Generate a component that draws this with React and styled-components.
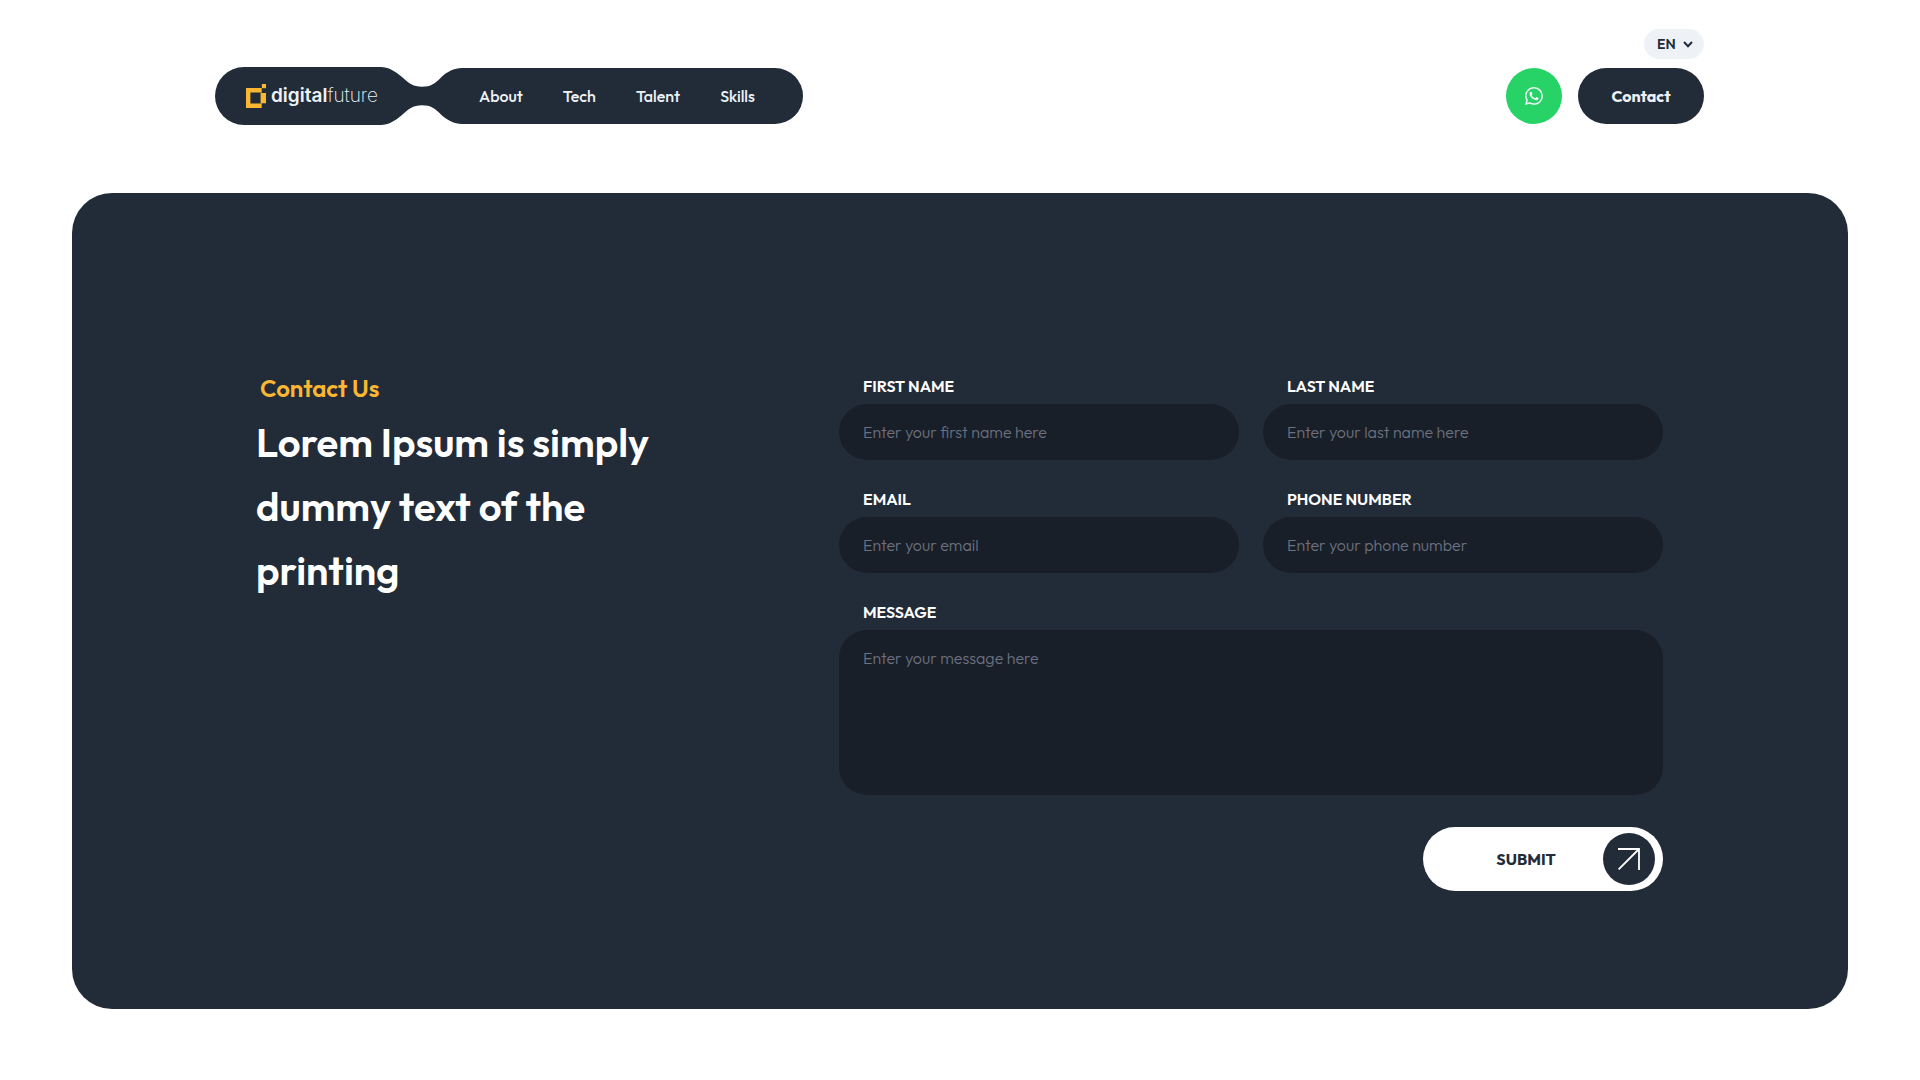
import React from "react";
import styled, { createGlobalStyle } from "styled-components";
import { BsWhatsapp } from "react-icons/bs";

const color = {
  ink: "#222c38",
  field: "#191f29",
  mist: "#eef2f6",
  hint: "#6b7280",
  accent: "#fbb731",
  whatsapp: "#27d367",
};

const GlobalStyle = createGlobalStyle`
  *, *::before, *::after { box-sizing: border-box; }
  body {
    margin: 0;
    background: #fff;
    color: ${color.ink};
    font-family: Outfit, Lato, "Liberation Sans", sans-serif;
    font-size: 16px;
    line-height: 24px;
  }
  button, input, select, textarea { font: inherit; }
`;

const Page = styled.div`
  padding: 29px 72px 71px;
`;

const Header = styled.header`
  display: flex;
  flex-direction: column;
  gap: 8px;
  width: 100%;
  max-width: 1490px;
  margin: 0 auto 68px;
  padding-right: 1px;
`;

const LanguagePicker = styled.label`
  position: relative;
  align-self: flex-end;
  display: block;
`;

const LanguageSelect = styled.select`
  display: block;
  width: 60px;
  height: 30px;
  padding: 0 24px 0 13px;
  border: 0;
  border-radius: 15px;
  appearance: none;
  background: ${color.mist};
  color: ${color.ink};
  font-size: 14px;
  font-weight: 600;
  cursor: pointer;
`;

const Chevron = styled.svg`
  position: absolute;
  top: 12px;
  right: 11px;
  pointer-events: none;
`;

const HeaderRow = styled.div`
  display: flex;
  flex-wrap: wrap;
  align-items: center;
  justify-content: space-between;
  gap: 16px;
`;

const MenuBar = styled.div`
  display: flex;
  align-items: center;
`;

const Brand = styled.a`
  display: flex;
  align-items: center;
  gap: 5px;
  height: 58px;
  padding: 0 3px 0 31px;
  border-radius: 29px 0 0 29px;
  background: ${color.ink};
  color: ${color.mist};
  font-family: Inter, "Liberation Sans", sans-serif;
  font-size: 19px;
  font-weight: 200;
  text-decoration: none;

  b { font-weight: 600; }
`;

const Bridge = styled.svg`
  display: block;
  flex: none;
`;

const Nav = styled.nav`
  display: flex;
  align-items: center;
  gap: 40px;
  height: 56px;
  padding: 0 48px 0 17px;
  border-radius: 0 28px 28px 0;
  background: ${color.ink};
`;

const NavLink = styled.a`
  color: ${color.mist};
  font-weight: 500;
  text-decoration: none;
`;

const Actions = styled.div`
  display: flex;
  gap: 16px;
`;

const WhatsAppLink = styled.a`
  display: grid;
  place-items: center;
  width: 56px;
  height: 56px;
  border-radius: 50%;
  background: ${color.whatsapp};
  color: ${color.mist};
`;

const ContactButton = styled.button`
  width: 126px;
  height: 56px;
  border: 0;
  border-radius: 28px;
  background: ${color.ink};
  color: ${color.mist};
  font-weight: 700;
  cursor: pointer;
`;

const Panel = styled.main`
  padding: 181px 16px 118px;
  border-radius: 40px;
  background: ${color.ink};
  color: #fff;
`;

const Columns = styled.div`
  display: grid;
  grid-template-columns: 583fr 824fr;
  max-width: 1408px;
  margin: 0 auto;
  padding-right: 1px;

  @media (max-width: 1100px) {
    grid-template-columns: 1fr;
    gap: 48px;
  }
`;

const Intro = styled.section`
  max-width: 440px;
`;

const Eyebrow = styled.p`
  margin: 0 0 8px;
  padding-left: 4px;
  color: ${color.accent};
  font-size: 24px;
  font-weight: 600;
  line-height: 28px;
`;

const Heading = styled.h1`
  margin: 0;
  font-size: 40px;
  font-weight: 600;
  line-height: 64px;
`;

const Form = styled.form`
  display: grid;
  grid-template-columns: 1fr 1fr;
  gap: 27px 24px;
`;

const Field = styled.div`
  display: flex;
  flex-direction: column;
  gap: 6px;
  grid-column: ${(p) => (p.$wide ? "1 / -1" : "auto")};
`;

const FieldLabel = styled.label`
  padding-left: 24px;
  font-weight: 600;
  text-transform: uppercase;
`;

const TextBox = styled.input`
  width: 100%;
  height: ${(p) => (p.$tall ? "165px" : "56px")};
  padding: 16px 24px;
  border: 0;
  border-radius: 28px;
  outline-offset: 2px;
  background: ${color.field};
  color: #fff;
  font-weight: 300;
  resize: none;

  &::placeholder {
    color: ${color.hint};
    opacity: 1;
  }
`;

const SubmitRow = styled.div`
  display: flex;
  justify-content: flex-end;
  grid-column: 1 / -1;
  padding-top: 5px;
`;

const SubmitButton = styled.button`
  display: flex;
  align-items: center;
  width: 240px;
  height: 64px;
  padding: 0 8px 0 26px;
  border: 0;
  border-radius: 32px;
  background: #fff;
  color: ${color.ink};
  font-weight: 700;
  cursor: pointer;
`;

const SubmitText = styled.span`
  flex: 1;
  text-align: center;
`;

const ArrowDisc = styled.span`
  display: grid;
  place-items: center;
  width: 52px;
  height: 52px;
  border-radius: 50%;
  background: ${color.ink};
`;

const links = ["About", "Tech", "Talent", "Skills"];

const fields = [
  { id: "first-name", label: "First name", hint: "Enter your first name here", type: "text" },
  { id: "last-name", label: "Last name", hint: "Enter your last name here", type: "text" },
  { id: "email", label: "Email", hint: "Enter your email", type: "email" },
  { id: "phone", label: "Phone number", hint: "Enter your phone number", type: "tel" },
];

function LogoMark() {
  return (
    <svg width="20" height="24" viewBox="0 0 20 24" fill={color.accent} aria-hidden="true">
      <path d="M0 4H15.7V8.4H4.4V19.5H15.7V24H0Z" />
      <path d="M15 9H20V19.3H15Z" />
      <path d="M15.9 0H20V4.2H15.9Z" />
      <path d="M14.6 8.4H15.4V19.5H14.6Z" />
    </svg>
  );
}

export default function App() {
  return (
    <>
      <GlobalStyle />
      <Page>
        <Header>
          <LanguagePicker>
            <LanguageSelect aria-label="Language" defaultValue="EN">
              <option>EN</option>
            </LanguageSelect>
            <Chevron width="10" height="7" viewBox="0 0 10 7" fill="none" aria-hidden="true">
              <path d="M1 1L5 5.2L9 1" stroke={color.ink} strokeWidth="2" />
            </Chevron>
          </LanguagePicker>
          <HeaderRow>
            <MenuBar>
              <Brand href="#">
                <LogoMark />
                <span><b>digital</b>future</span>
              </Brand>
              <Bridge width="81" height="58" viewBox="0 0 81 58" fill={color.ink} aria-hidden="true">
                <path d="M0 0C7 0 14 4 20.7 9.7C27 15.6 32 19.7 41 19.7C50 19.7 54 16.5 60.7 9.7C66 5 73 1 81 1V57C73 57 66 53 60.7 48.3C54 41.5 50 38.3 41 38.3C32 38.3 27 42.4 20.7 48.3C14 54 7 58 0 58Z" />
              </Bridge>
              <Nav>
                {links.map((name) => (
                  <NavLink key={name} href={`#${name.toLowerCase()}`}>{name}</NavLink>
                ))}
              </Nav>
            </MenuBar>
            <Actions>
              <WhatsAppLink href="#whatsapp" aria-label="WhatsApp">
                <BsWhatsapp size={18} />
              </WhatsAppLink>
              <ContactButton type="button">Contact</ContactButton>
            </Actions>
          </HeaderRow>
        </Header>

        <Panel>
          <Columns>
            <Intro>
              <Eyebrow>Contact Us</Eyebrow>
              <Heading>Lorem Ipsum is simply dummy text of the printing</Heading>
            </Intro>
            <Form onSubmit={(e) => e.preventDefault()}>
              {fields.map((f) => (
                <Field key={f.id}>
                  <FieldLabel htmlFor={f.id}>{f.label}</FieldLabel>
                  <TextBox id={f.id} type={f.type} placeholder={f.hint} />
                </Field>
              ))}
              <Field $wide>
                <FieldLabel htmlFor="message">Message</FieldLabel>
                <TextBox as="textarea" id="message" $tall placeholder="Enter your message here" />
              </Field>
              <SubmitRow>
                <SubmitButton type="submit">
                  <SubmitText>SUBMIT</SubmitText>
                  <ArrowDisc>
                    <svg width="22" height="22" viewBox="0 0 22 22" fill="none" stroke="#fff" strokeWidth="1.8" aria-hidden="true">
                      <path d="M0 1H21V22M21 1L0.6 21.4" />
                    </svg>
                  </ArrowDisc>
                </SubmitButton>
              </SubmitRow>
            </Form>
          </Columns>
        </Panel>
      </Page>
    </>
  );
}
